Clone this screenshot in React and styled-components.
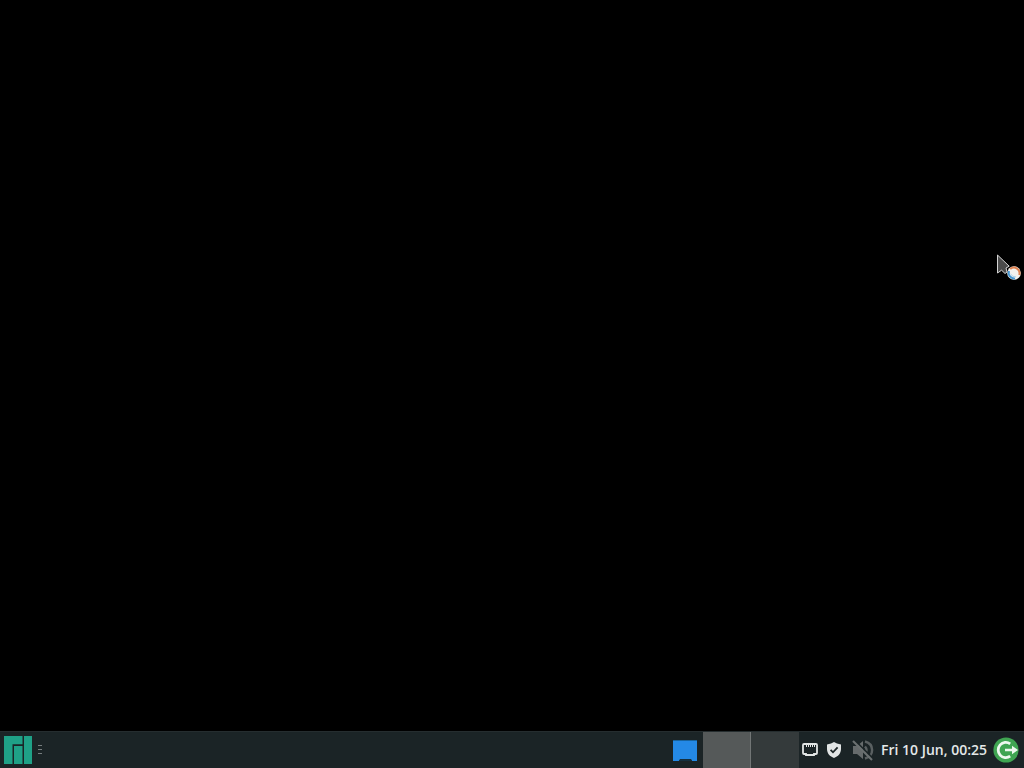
import React from "react";
import styled, { createGlobalStyle } from "styled-components";

const App = () => {
	return (
		<>
			<GlobalStyle />
			<Desktop>
				<Workarea>
					<Pointer viewBox='0 0 28 30' aria-hidden='true'>
						<path
							d='M1.5 2 V20 L5.6 17.2 L9 20.5 L11 19 L10 15 L13.2 13.2 Z'
							fill='#4b4b4b'
							stroke='#d4d4d4'
							strokeWidth='1'
							strokeLinejoin='round'
						/>
						<circle cx='18' cy='20' r='6.8' fill='#f4f1ee' />
						<path d='M13 18 A5.6 5.6 0 0 0 19 25.4' fill='none' stroke='#4797d2' strokeWidth='2' />
						<path d='M14.2 16 A5.6 5.6 0 0 1 23.2 22' fill='none' stroke='#df814f' strokeWidth='2' />
						<path d='M14.6 21 Q16.5 24 20 24' fill='none' stroke='#a9d3ee' strokeWidth='1' />
					</Pointer>
				</Workarea>
				<Panel>
					<MenuButton aria-label='Applications'>
						<Glyph $size={28} viewBox='0 0 28 28' fill='#1fa187'>
							<path d='M0 0 H18.5 V8.2 H8.5 V28 H0 Z' />
							<path d='M10 10 H18.5 V28 H10 Z' />
							<path d='M20 0 H28 V28 H20 Z' />
						</Glyph>
					</MenuButton>
					<Handle />
					<Spacer />
					<DesktopButton aria-label='Show desktop'>
						<Glyph $size={26} viewBox='0 0 26 26'>
							<path d='M1 3 H25 V23 H1 Z' fill='#17639f' />
							<path d='M1 4 H25 V24 H20 L19 22 H8 L7 24 H1 Z' fill='#2489e6' />
							<path d='M8 22 H19 L20 24 H7 Z' fill='#15303f' />
						</Glyph>
					</DesktopButton>
					<Workspace $active aria-label='Workspace 1' />
					<Workspace aria-label='Workspace 2' />
					<Tray>
						<TrayButton aria-label='Network'>
							<Glyph $size={16} viewBox='0 0 16 16'>
								<path
									d='M2 2 H14 Q15 2 15 3 V11 Q15 12 14 12 H12 V13 H4 V12 H2 Q1 12 1 11 V3 Q1 2 2 2 Z'
									fill='none'
									stroke='#e2e5e5'
									strokeWidth='1.8'
								/>
								<path d='M4.5 2 V5 M6.5 2 V5 M8.5 2 V5 M10.5 2 V5 M12.5 2 V5' stroke='#e2e5e5' />
							</Glyph>
						</TrayButton>
						<TrayButton aria-label='Updates'>
							<Glyph $size={16} viewBox='0 0 16 16'>
								<path
									d='M8 0 Q10.5 2 15 2.4 V7 C15 11.5 12 14.5 8 16 C4 14.5 1 11.5 1 7 V2.4 Q5.5 2 8 0 Z'
									fill='#e2e5e5'
								/>
								<path d='M4.6 7.8 L7 10.3 L11.6 5.4' fill='none' stroke='#1d2628' strokeWidth='1.8' />
							</Glyph>
						</TrayButton>
					</Tray>
					<VolumeButton aria-label='Volume muted'>
						<Glyph $size={22} viewBox='0 0 22 22'>
							<path d='M1 7 H5 L11 2 V20 L5 15 H1 Z' fill='#666b6c' />
							<path
								d='M13 7.5 Q16 11 13 14.5 M13 2.5 C22.5 5 22.5 17 13 19.5'
								fill='none'
								stroke='#5a6061'
								strokeWidth='2.4'
							/>
							<path d='M1.5 0 L21.5 20' stroke='#1b2426' strokeWidth='1.6' />
							<path d='M1 2 L20 21' stroke='#6b7071' strokeWidth='2.2' />
						</Glyph>
					</VolumeButton>
					<Clock>Fri 10 Jun, 00:25</Clock>
					<LogoutButton aria-label='Log out'>
						<Glyph $size={26} viewBox='0 0 26 26'>
							<circle cx='13' cy='13' r='12.6' fill='#40a552' />
							<path
								d='M17.2 6.8 A7.6 7.6 0 1 0 17.2 19.2'
								fill='none'
								stroke='#eef8ef'
								strokeWidth='2.8'
							/>
							<path d='M12 11.8 H19 V8.8 L25 13 L19 17.2 V14.2 H12 Z' fill='#eef8ef' />
						</Glyph>
					</LogoutButton>
				</Panel>
			</Desktop>
		</>
	);
};

const GlobalStyle = createGlobalStyle`
	* {
		box-sizing: border-box;
	}

	body {
		margin: 0;
		background: #000;
	}
`;

const Desktop = styled.div`
	display: flex;
	flex-direction: column;
	min-height: 100vh;
	background: #000;
	font-family: "Open Sans", "Noto Sans", sans-serif;
`;

const Workarea = styled.main`
	position: relative;
	flex: 1;
`;

const Pointer = styled.svg`
	position: absolute;
	top: 253px;
	right: 0;
	width: 28px;
	height: 30px;
`;

const Panel = styled.footer`
	display: flex;
	align-items: center;
	height: 37px;
	background: #1b2426;
	border-top: 1px solid #252d2f;
`;

const PanelButton = styled.button`
	display: flex;
	flex: none;
	align-items: center;
	justify-content: center;
	width: 36px;
	height: 100%;
	padding: 0;
	border: 0;
	background: transparent;
	cursor: default;
`;

const MenuButton = styled(PanelButton)``;

const DesktopButton = styled(PanelButton)``;

const Workspace = styled(PanelButton)`
	width: 48px;
	background: ${(props) => (props.$active ? "#555959" : "#343a3b")};
	border-right: 1px solid ${(props) => (props.$active ? "#727676" : "#343a3b")};
`;

const Tray = styled.div`
	display: flex;
	height: 100%;
`;

const TrayButton = styled(PanelButton)`
	width: 24px;
	padding-right: 2px;
`;

const VolumeButton = styled(PanelButton)`
	width: 32px;
`;

const LogoutButton = styled(PanelButton)``;

const Glyph = styled.svg`
	display: block;
	flex: none;
	width: ${(props) => props.$size}px;
	height: ${(props) => props.$size}px;
`;

const Handle = styled.span`
	width: 4px;
	height: 10px;
	margin-left: 2px;
	background: repeating-linear-gradient(#777e7f 0 1px, transparent 1px 4px);
`;

const Spacer = styled.div`
	flex: 1;
`;

const Clock = styled.time`
	padding: 0 1px 0 2px;
	color: #e4e8e8;
	font-size: 14px;
	font-weight: 600;
	line-height: 20px;
	white-space: nowrap;
`;

export default App;
